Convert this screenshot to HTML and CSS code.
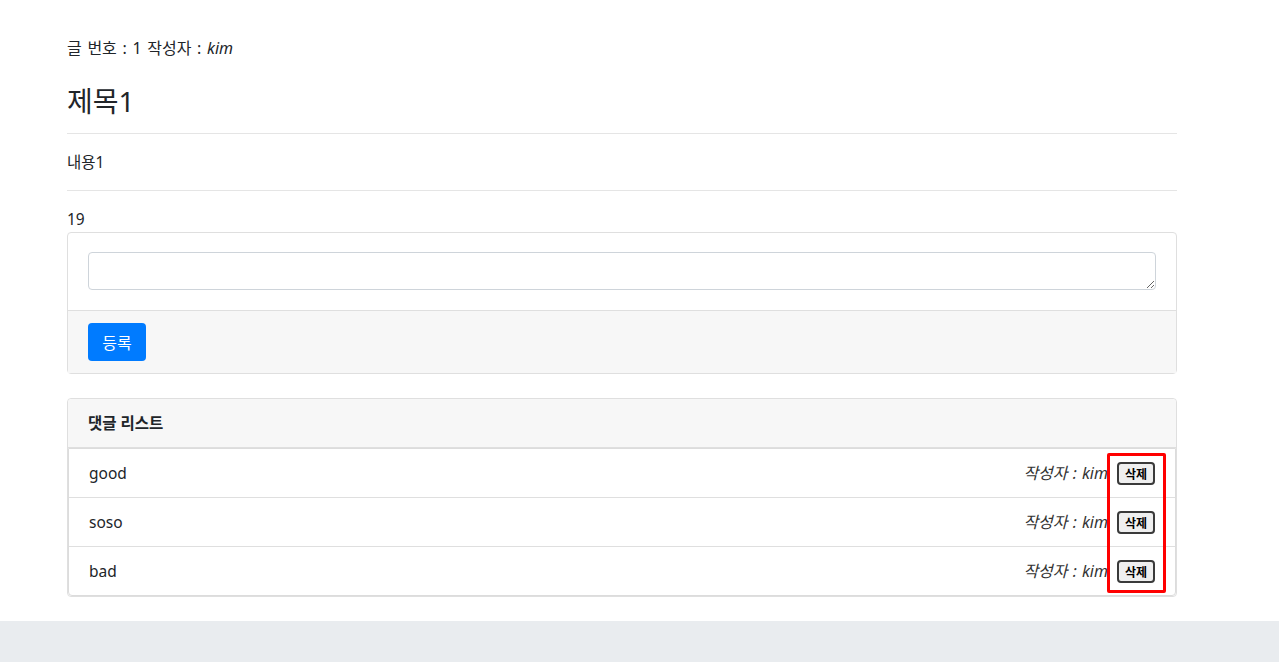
FILE: index.html
```html
<!DOCTYPE html>
<html lang="ko">
<head>
<meta charset="utf-8">
<title>글 보기</title>
<link rel="stylesheet" href="styles.css">
</head>
<body>
<main class="container">
  <p class="meta">글 번호 : 1 작성자 : <em>kim</em></p>
  <h3 class="title">제목1</h3>
  <hr class="rule">
  <p class="content">내용1</p>
  <hr class="rule">
  <p class="views">19</p>

  <form class="card">
    <div class="card-body">
      <textarea class="input" rows="1"></textarea>
    </div>
    <div class="card-footer">
      <button type="button" class="btn-primary">등록</button>
    </div>
  </form>

  <section class="card comments">
    <div class="card-header">댓글 리스트</div>
    <ul class="list">
      <li class="item"><span>good</span><span class="right"><em class="author">작성자 : kim</em><button type="button" class="btn-del">삭제</button></span></li>
      <li class="item"><span>soso</span><span class="right"><em class="author">작성자 : kim</em><button type="button" class="btn-del">삭제</button></span></li>
      <li class="item"><span>bad</span><span class="right"><em class="author">작성자 : kim</em><button type="button" class="btn-del">삭제</button></span></li>
    </ul>
    <div class="highlight"></div>
  </section>
</main>
<footer class="footer"></footer>
</body>
</html>
```

FILE: styles.css
```css
html, body {
  margin: 0;
  padding: 0;
}
body {
  font-family: "Noto Sans", "Noto Sans CJK KR", sans-serif;
  font-size: 15.5px;
  line-height: 24px;
  color: #212529;
  background: #fff;
}
.container {
  width: 1110px;
  margin: 0 0 0 67px;
  padding-top: 36px;
  padding-bottom: 24px;
}
.meta {
  margin: 0 0 24px;
  font-size: 16px;
  word-spacing: 1.5px;
}
.meta em {
  font-style: italic;
}
.title {
  margin: 0 0 15px;
  font-size: 28px;
  line-height: 34px;
  font-weight: 400;
}
.rule {
  margin: 0;
  border: 0;
  border-top: 1px solid #e5e5e5;
}
.content {
  margin: 16px 0 16px;
}
.views {
  margin: 16px 0 1px;
}
.card {
  display: block;
  border: 1px solid #dfdfdf;
  border-radius: 4px;
  margin: 0;
  background: #fff;
}
.card-body {
  padding: 19px 20px 20px;
}
.input {
  display: block;
  box-sizing: border-box;
  width: 100%;
  height: 38px;
  border: 1px solid #ced4da;
  border-radius: 4px;
  padding: 6px 12px;
  font: inherit;
  resize: vertical;
}
.card-footer {
  background: #f7f7f7;
  border-top: 1px solid #dfdfdf;
  padding: 12px 20px 12px;
}
.btn-primary {
  display: block;
  width: 58px;
  height: 38px;
  border: 0;
  border-radius: 4px;
  background: #007bff;
  color: #fff;
  font-family: inherit;
  font-size: 16px;
  padding: 0;
}
.comments {
  position: relative;
  margin-top: 24px;
}
.card-header {
  background: #f7f7f7;
  padding: 12px 20px;
  font-weight: 700;
  border-bottom: 1px solid #dfdfdf;
  border-radius: 4px 4px 0 0;
}
.list {
  list-style: none;
  margin: 0;
  padding: 0;
  border: 1px solid #dcdcdc;
  border-radius: 0 0 4px 4px;
}
.item {
  display: flex;
  justify-content: space-between;
  align-items: center;
  padding: 12px 20px;
  border-top: 1px solid #dfdfdf;
}
.item:first-child {
  border-top: 0;
}
.right {
  display: flex;
  align-items: center;
}
.author {
  font-style: italic;
  font-size: 16px;
  word-spacing: 1px;
  color: #333;
  margin-right: 9px;
}
.btn-del {
  box-sizing: border-box;
  width: 38px;
  height: 23px;
  padding: 0;
  border: 2px solid #3a3a3a;
  border-radius: 4px;
  background: #efefef;
  color: #000;
  font-family: "Noto Sans CJK KR", sans-serif;
  font-size: 12px;
  font-weight: 700;
  line-height: 19px;
}
.highlight {
  position: absolute;
  right: 10px;
  top: 54px;
  width: 59px;
  height: 140px;
  box-sizing: border-box;
  border: 3px solid #ff0000;
  border-radius: 2px;
  pointer-events: none;
}
.footer {
  height: 41px;
  background: #e9ecef;
}
```
